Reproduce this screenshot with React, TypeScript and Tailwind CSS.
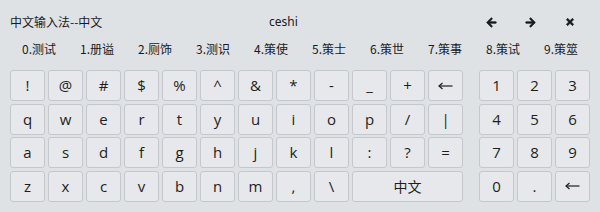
import React from "react";
import { FaArrowLeft, FaArrowRight, FaTimes } from "react-icons/fa";

const rows: string[][] = [
  ["!", "@", "#", "$", "%", "^", "&", "*", "-", "_", "+", "←"],
  ["q", "w", "e", "r", "t", "y", "u", "i", "o", "p", "/", "|"],
  ["a", "s", "d", "f", "g", "h", "j", "k", "l", ":", "?", "="],
  ["z", "x", "c", "v", "b", "n", "m", ",", "\\", "中文"],
];

const pad: string[][] = [
  ["1", "2", "3"],
  ["4", "5", "6"],
  ["7", "8", "9"],
  ["0", ".", "←"],
];

const cands = ["0.测试", "1.册谥", "2.厕饰", "3.测识", "4.策使", "5.策士", "6.策世", "7.策事", "8.策试", "9.策筮"];

function ThinArrow() {
  return (
    <svg width="15" height="8" viewBox="0 0 15 8" fill="none" stroke="#1e1e1e" strokeWidth="1.2">
      <path d="M1 4 H14.5" />
      <path d="M4.5 1 L1 4 L4.5 7" />
    </svg>
  );
}

function Key({ label, wide }: { label: string; wide?: boolean }) {
  const isArrow = label === "←";
  const isCjk = label === "中文";
  return (
    <div
      className={
        (wide ? "w-[111px] " : "w-[35px] ") +
        "h-[31px] shrink-0 flex items-center justify-center rounded-[3px] border border-[#c4c7cb] bg-[#e6e8eb] text-[#1e1e1e] " +
        (isCjk ? "text-[14px] " : "text-[15px] ")
      }
      style={{ fontFamily: isCjk ? '"Noto Sans CJK SC", sans-serif' : '"Open Sans", "DejaVu Sans", sans-serif' }}
    >
      {isArrow ? <ThinArrow /> : label}
    </div>
  );
}

export default function App() {
  return (
    <div
      className="w-[600px] h-[212px] bg-[#dfe2e5] overflow-hidden text-[#1a1a1a]"
      style={{ fontFamily: '"Noto Sans CJK SC", "Noto Sans", sans-serif' }}
    >
      <div className="h-[14px]" />
      <div className="h-[16px] flex items-center text-[12px]">
        <div className="w-[269px] pl-[10px]">中文输入法--中文</div>
        <div className="w-[217px]" style={{ fontFamily: '"Noto Sans", sans-serif' }}>ceshi</div>
        <div className="w-[39px] flex"><FaArrowLeft size={11} stroke="currentColor" strokeWidth={30} /></div>
        <div className="w-[40px] flex"><FaArrowRight size={11} stroke="currentColor" strokeWidth={30} /></div>
        <div className="flex"><FaTimes size={10} stroke="currentColor" strokeWidth={40} /></div>
      </div>
      <div className="h-[11px]" />
      <div className="h-[16px] flex items-center pl-[22px] text-[12px]">
        {cands.map((c) => (
          <div key={c} className="w-[58px] shrink-0">{c}</div>
        ))}
      </div>
      <div className="h-[13px]" />
      <div className="flex pl-[10px]">
        <div className="flex flex-col gap-[2.5px]">
          {rows.map((r, i) => (
            <div key={i} className="flex gap-[3px]">
              {r.map((k) => (
                <Key key={k} label={k} wide={k === "中文"} />
              ))}
            </div>
          ))}
        </div>
        <div className="ml-[16px] flex flex-col gap-[2.5px]">
          {pad.map((r, i) => (
            <div key={i} className="flex gap-[3px]">
              {r.map((k) => (
                <Key key={k} label={k} />
              ))}
            </div>
          ))}
        </div>
      </div>
    </div>
  );
}
